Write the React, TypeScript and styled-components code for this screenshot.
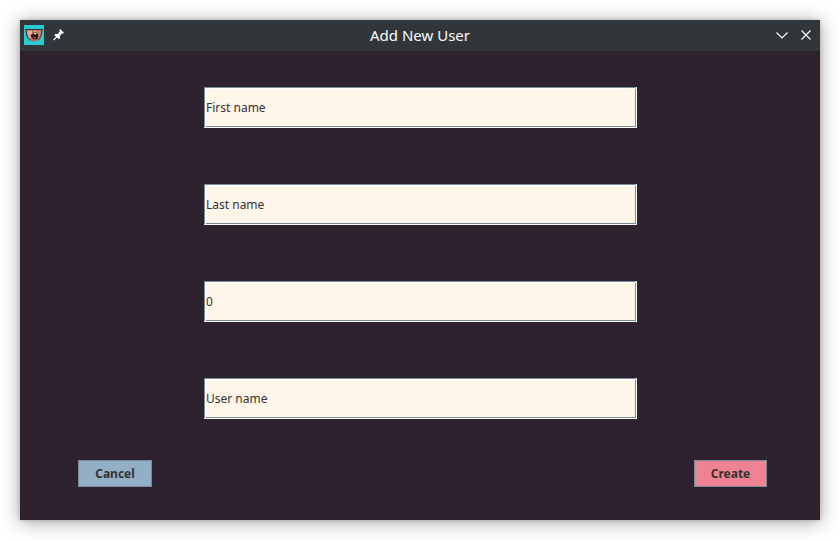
import React from "react";
import styled, { createGlobalStyle } from "styled-components";

const GlobalStyle = createGlobalStyle`
  * { box-sizing: border-box; }
  body { margin: 0; background: #fff; overflow: hidden; }
`;

const Desktop = styled.main`
  width: 840px;
  height: 540px;
  padding: 20px;
  font-family: "Noto Sans", sans-serif;
`;

const Window = styled.section`
  width: 800px;
  height: 500px;
  display: flex;
  flex-direction: column;
  background: #2e222f;
  box-shadow: 0 2px 18px rgba(0, 0, 0, 0.36), 0 0 4px rgba(0, 0, 0, 0.2);
`;

const TitleBar = styled.header`
  height: 31px;
  flex: none;
  display: grid;
  grid-template-columns: 64px 1fr 64px;
  align-items: center;
  padding: 0 4px 1px;
  background: #31363b;
  color: #fcfcfc;
`;

const TitleIcons = styled.div`
  display: flex;
  align-items: center;
  gap: 7px;
  height: 20px;
  svg { display: block; }
`;

const WindowControls = styled(TitleIcons)`
  gap: 8px;
  justify-content: flex-end;
  padding-right: 2px;
`;

const Title = styled.h1`
  margin: 0;
  text-align: center;
  font-size: 15px;
  font-weight: 400;
  line-height: 20px;
`;

const Form = styled.form`
  flex: 1;
  padding-top: 36px;
`;

const Fields = styled.div`
  display: flex;
  flex-direction: column;
  gap: 56px;
  width: 433px;
  margin-left: 184px;
`;

const Field = styled.input`
  display: block;
  width: 433px;
  height: 41px;
  margin: 0;
  padding: 0 2px;
  border: 0;
  border-radius: 0;
  outline: 0;
  background: #fff6e9;
  box-shadow: inset -1px -1px #fff, inset 1px 1px #7a8a99, inset 2px 2px #fff, inset -2px -2px #7a8a99;
  color: #333;
  font: 12px/16px "Noto Sans", sans-serif;
`;

const Actions = styled.footer`
  display: flex;
  justify-content: space-between;
  margin-top: 41px;
  padding: 0 53px 0 58px;
`;

const Button = styled.button<{ $color: string; $width: number }>`
  width: ${(p) => p.$width}px;
  height: 27px;
  padding: 0;
  border: 1px solid #7a8a99;
  border-radius: 0;
  background: ${(p) => p.$color};
  color: #333;
  font: bold 12px/16px "Noto Sans", sans-serif;
`;

const AppIcon = () => (
  <svg width="20" height="20" viewBox="0 0 20 20">
    <path fill="#28cbd0" d="M0 0h20v20H0z" />
    <path fill="#b96d5f" d="M2 5h16c.3 6-2.500 11.500-8 11.500S1.700 11 2 5z" />
    <path fill="#e39c88" d="M3 5.500h5.500L7 12l-1.500 2C3.500 12 3 9 3 5.500z" />
    <path fill="#c98270" d="M12 5.500h5c0 4-1 7-3 9z" />
    <path fill="#f0b9a5" d="M5 6.500h2.500v3H5zM10 5.500h1.500v2H10z" />
    <path fill="none" stroke="#39302f" strokeWidth="1" d="M1 4.500h18M2 5c.3 5 1.300 8 4 10.300M18 5c-.3 5-1.300 8-4 10.300" />
    <path fill="#24171a" d="M6.500 10c2-.2 3-2.500 5-2.500 1.700 0 2.700 1.500 2.700 3.500S13 14.500 11 14.500 7.500 12.500 6.500 10z" />
    <path fill="#efe5dc" d="M10 8h2.500v1.300H10z" />
    <path fill="#b9433e" d="M9 12.600c1-.8 2.500-.8 3.500 0-.5 1.500-2.500 1.700-3.500 0z" />
  </svg>
);

const PinIcon = () => (
  <svg width="15" height="16" viewBox="0 0 15 16">
    <path fill="#fcfcfc" d="M9.300 2 13 5.700l-1.200 1-.9-.1-2.100 2.300.3 2.300-1.200 1.100-1.900-1.800-3.100 3.100-.9-.8 3-3-1.700-1.800 1.100-1.100 2.100.1L8.800 4.500l-.4-1.300z" />
  </svg>
);

const MinimizeIcon = () => (
  <svg width="16" height="16" viewBox="0 0 16 16">
    <path fill="none" stroke="#fcfcfc" strokeWidth="1.15" d="m2.5 5.500 5.500 5.500 5.500-5.500" />
  </svg>
);

const CloseIcon = () => (
  <svg width="16" height="16" viewBox="0 0 16 16">
    <path fill="none" stroke="#fcfcfc" strokeWidth="1.15" d="m3.500 3.500 9 9m0-9-9 9" />
  </svg>
);

const fields = [
  { label: "First name", value: "First name" },
  { label: "Last name", value: "Last name" },
  { label: "Age", value: "0" },
  { label: "User name", value: "User name" },
];

export default function App() {
  return (
    <Desktop>
      <GlobalStyle />
      <Window>
        <TitleBar>
          <TitleIcons><AppIcon /><PinIcon /></TitleIcons>
          <Title>Add New User</Title>
          <WindowControls><MinimizeIcon /><CloseIcon /></WindowControls>
        </TitleBar>
        <Form onSubmit={(event) => event.preventDefault()}>
          <Fields>
            {fields.map((field) => (
              <Field key={field.label} aria-label={field.label} defaultValue={field.value} />
            ))}
          </Fields>
          <Actions>
            <Button type="button" $color="#93afc5" $width={74}>Cancel</Button>
            <Button type="submit" $color="#f08393" $width={73}>Create</Button>
          </Actions>
        </Form>
      </Window>
    </Desktop>
  );
}
